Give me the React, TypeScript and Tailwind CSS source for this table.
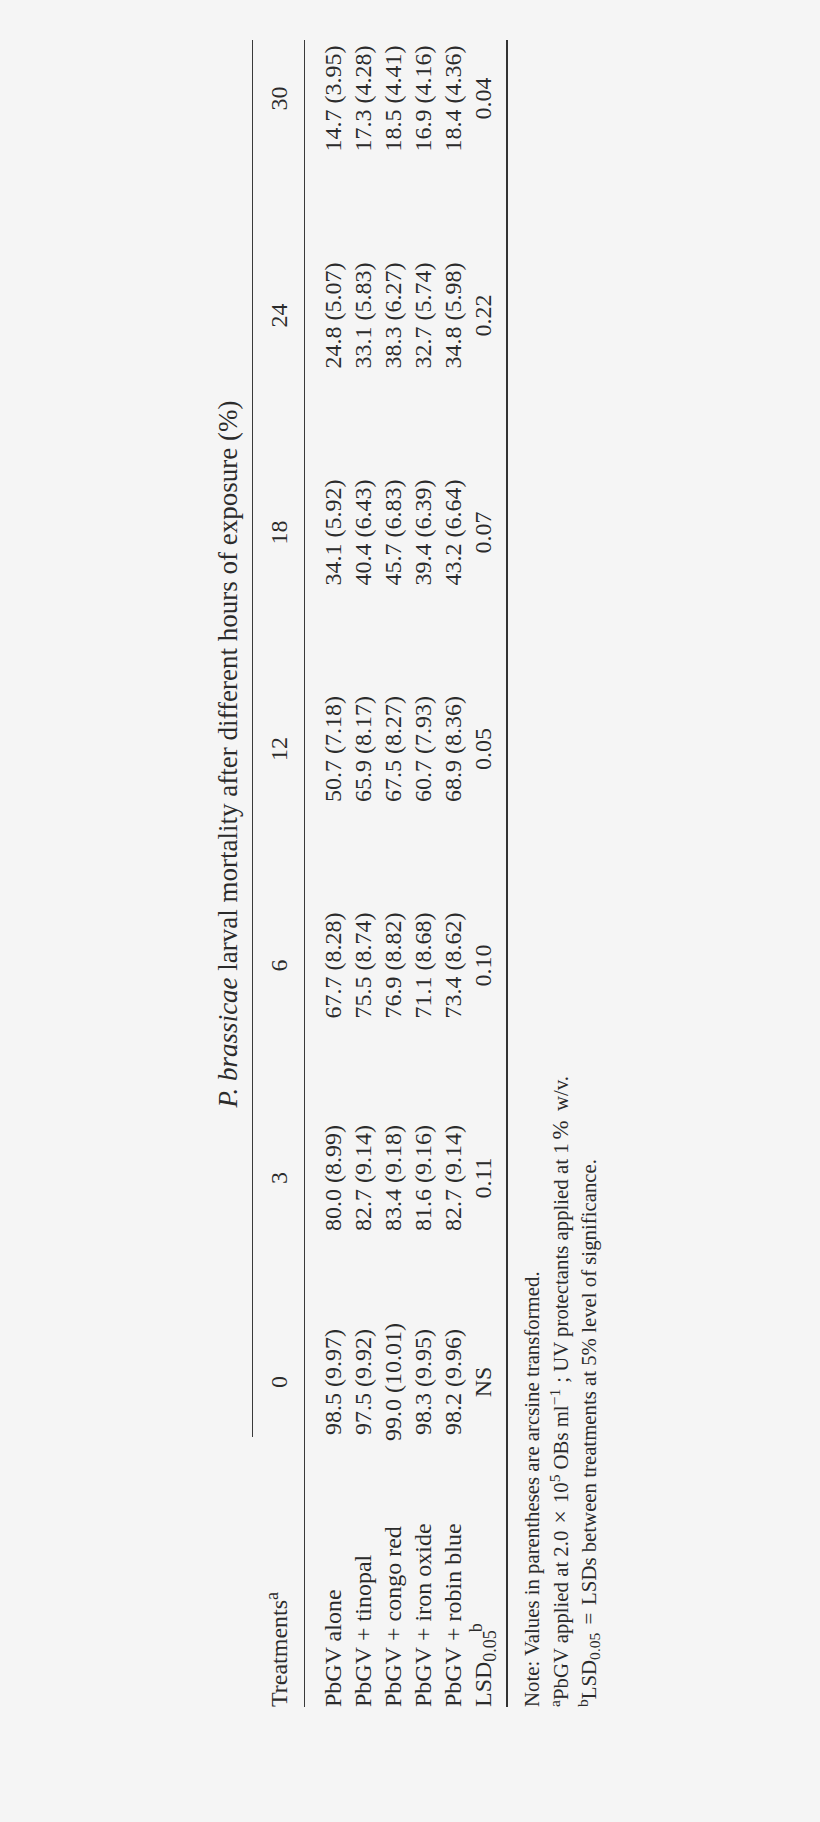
const rows = [
  { name: 'PbGV alone', v: ['98.5 (9.97)', '80.0 (8.99)', '67.7 (8.28)', '50.7 (7.18)', '34.1 (5.92)', '24.8 (5.07)', '14.7 (3.95)'] },
  { name: 'PbGV + tinopal', v: ['97.5 (9.92)', '82.7 (9.14)', '75.5 (8.74)', '65.9 (8.17)', '40.4 (6.43)', '33.1 (5.83)', '17.3 (4.28)'] },
  { name: 'PbGV + congo red', v: ['99.0 (10.01)', '83.4 (9.18)', '76.9 (8.82)', '67.5 (8.27)', '45.7 (6.83)', '38.3 (6.27)', '18.5 (4.41)'] },
  { name: 'PbGV + iron oxide', v: ['98.3 (9.95)', '81.6 (9.16)', '71.1 (8.68)', '60.7 (7.93)', '39.4 (6.39)', '32.7 (5.74)', '16.9 (4.16)'] },
  { name: 'PbGV + robin blue', v: ['98.2 (9.96)', '82.7 (9.14)', '73.4 (8.62)', '68.9 (8.36)', '43.2 (6.64)', '34.8 (5.98)', '18.4 (4.36)'] },
];
const lsd = ['NS', '0.11', '0.10', '0.05', '0.07', '0.22', '0.04'];
const hours = ['0', '3', '6', '12', '18', '24', '30'];

const cols = 'grid grid-cols-[225px_200px_208px_217px_216px_217px_217px_167px]';

function Cells({ values }: { values: string[] }) {
  return (
    <>
      {values.map((v, i) => (
        <div key={i} className={i === 6 ? 'pl-[50px] text-center whitespace-nowrap' : 'text-center whitespace-nowrap'}>
          {v}
        </div>
      ))}
    </>
  );
}

function Treatment({ name }: { name: string }) {
  const parts = name.split(' + ');
  if (parts.length === 1) return <>{name}</>;
  return (
    <>
      {parts[0]}
      <span className="px-[6px]">+</span>
      {parts[1]}
    </>
  );
}

export default function App() {
  return (
    <div className="w-[820px] h-[1822px] bg-[#f5f5f5] overflow-hidden flex items-center justify-center">
      <div className="w-[1822px] h-[820px] shrink-0 -rotate-90 pl-[115px] pt-[213px] text-[#2b2b2b] font-['Liberation_Serif',serif]">
        <div className="w-[1667px] text-[24px] leading-[30px]">
          <div className="ml-[270px] pr-[31px] h-[30px] text-center text-[27px] whitespace-nowrap">
            <i>P. brassicae</i> larval mortality after different hours of exposure (%)
          </div>
          <div className="ml-[270px] mt-[9px] h-px bg-[#3a3a3a]" />

          <div className={`${cols} mt-[11px] h-[30px]`}>
            <div className="whitespace-nowrap">
              Treatments<sup>a</sup>
            </div>
            <Cells values={hours} />
          </div>
          <div className="mt-[10px] h-px bg-[#3a3a3a]" />

          <div className="pt-[13px]">
            {rows.map((r) => (
              <div key={r.name} className={`${cols} h-[30px]`}>
                <div className="whitespace-nowrap">
                  <Treatment name={r.name} />
                </div>
                <Cells values={r.v} />
              </div>
            ))}
            <div className={`${cols} h-[30px]`}>
              <div className="whitespace-nowrap">
                LSD<sub>0.05</sub>
                <sup className="-ml-[2px]">b</sup>
              </div>
              <Cells values={lsd} />
            </div>
          </div>
          <div className="mt-[8px] h-[2px] bg-[#333]" />
        </div>

        <div className="mt-[10px] text-[20.8px] leading-[28px] whitespace-nowrap">
          <div>Note: Values in parentheses are arcsine transformed.</div>
          <div>
            <sup>a</sup>PbGV applied at 2.0
            <span className="px-[7px] text-[24px]">×</span>10<sup>5</sup>
            <span className="pl-[5px]">OBs ml</span>
            <sup>−1</sup>
            <span className="pl-[6px]">; UV protectants applied at 1</span>
            <span className="px-[4px] text-[23px]">%</span> w/v.
          </div>
          <div>
            <sup>b</sup>LSD<sub>0.05</sub>
            <span className="px-[8px]">=</span>LSDs between treatments at 5% level of significance.
          </div>
        </div>
      </div>
    </div>
  );
}
